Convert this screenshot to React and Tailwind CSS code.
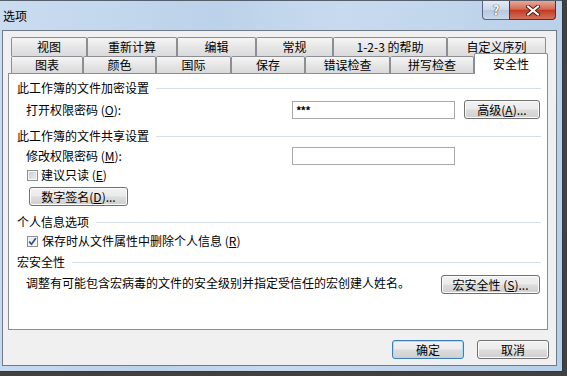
import React from "react";

function Header({ children, className }) {
  return (
    <div className={`flex h-[14px] items-center pl-[8px] pr-[6px] ${className}`}>
      <span>{children}</span>
      <div className="ml-[7px] h-px flex-1 bg-[#d5dfe5]" />
    </div>
  );
}

function Btn({ className, children, focus }) {
  return (
    <div
      className={`flex items-center justify-center rounded-[3px] border ${
        focus
          ? "border-[#3c7fb1] shadow-[inset_0_0_0_1px_#a9dcf7]"
          : "border-[#707070] shadow-[inset_0_0_0_1px_#fbfbfb]"
      } bg-[linear-gradient(#f2f2f2_0%,#ebebeb_48%,#dddddd_52%,#cfcfcf_100%)] ${className}`}
    >
      {children}
    </div>
  );
}

function Check({ checked }) {
  return (
    <div
      className={`flex h-[11px] w-[11px] shrink-0 items-center justify-center border border-[#8e8f8f] ${
        checked
          ? "bg-[linear-gradient(135deg,#e4e6e8,#fbfbfb)]"
          : "bg-[linear-gradient(135deg,#c9cbcd,#eeeeee)]"
      } shadow-[inset_0_0_0_1px_#f6f6f6]`}
    >
      {checked && (
        <svg width="9" height="9" viewBox="0 0 9 9">
          <path d="M1.2 4.6 L3.5 7.2 L7.8 1.3" fill="none" stroke="#2f4f8f" strokeWidth="1.7" />
        </svg>
      )}
    </div>
  );
}

const U = ({ children }) => <span className="underline underline-offset-[1px]">{children}</span>;

const row1 = [
  { t: "视图", w: "w-[76px]" },
  { t: "重新计算", w: "w-[90px]" },
  { t: "编辑", w: "w-[79px]" },
  { t: "常规", w: "w-[77px]" },
  { t: "1-2-3 的帮助", w: "w-[114px]" },
  { t: "自定义序列", w: "w-[99px]" },
];
const row2 = [
  { t: "图表", w: "w-[72px]" },
  { t: "颜色", w: "w-[73px]" },
  { t: "国际", w: "w-[75px]" },
  { t: "保存", w: "w-[74px]" },
  { t: "错误检查", w: "w-[85px]" },
  { t: "拼写检查", w: "w-[84px]" },
];

const tabCls =
  "flex items-center justify-center rounded-t-[2px] border border-b-0 border-[#8c8e94] bg-[linear-gradient(#f5f5f5,#e6e6e6_50%,#dadada)]";

export default function App() {
  return (
    <div className="relative h-[376px] w-[567px] overflow-hidden bg-[#414141] font-['Noto_Sans_CJK_SC','Noto_Sans',sans-serif] text-[12px] leading-[14px] text-black">
      <div className="flex h-[372px] w-[563px] flex-col border-r border-b border-[#2e3a46] bg-[linear-gradient(100deg,#cadcf0_0%,#bcd2ea_35%,#c8daee_55%,#b6cee8_100%)]">
        {/* title bar */}
        <div className="flex h-[30px] shrink-0 items-start border-t border-[#55606c]">
          <div className="ml-[3px] mt-[8px]">选项</div>
          <div className="ml-auto mr-[6px] flex">
            <div className="flex h-[19px] w-[27px] items-center justify-center rounded-bl-[4px] border border-t-0 border-r-0 border-[#56667c] bg-[linear-gradient(#e3ebf5,#cbd8e8_50%,#b7c9de_51%,#c9d8ea)] text-[13px] font-bold text-white [text-shadow:0_0_1px_#333,0_0_1px_#333]">
              ?
            </div>
            <div className="flex h-[19px] w-[47px] items-center justify-center rounded-br-[4px] border border-t-0 border-[#6b2a20] bg-[linear-gradient(#e8a898,#d46a55_45%,#c23b22_52%,#d5705a)]">
              <svg width="14" height="11" viewBox="0 0 14 11">
                <path d="M2 1.5 L12 9.5 M12 1.5 L2 9.5" stroke="#4a1f18" strokeWidth="4" strokeLinecap="round" />
                <path d="M2 1.5 L12 9.5 M12 1.5 L2 9.5" stroke="#ffffff" strokeWidth="2.2" strokeLinecap="round" />
              </svg>
            </div>
          </div>
        </div>

        {/* client */}
        <div className="ml-[2px] flex h-[336px] w-[555px] shrink-0 flex-col border border-[#6d7a88] bg-[#f0f0f0] pl-[5px] pt-[6px]">
          {/* tabs */}
          <div className="ml-[3px] flex flex-col">
            <div className="flex h-[19px]">
              {row1.map((r) => (
                <div key={r.t} className={`${tabCls} ${r.w}`}>
                  {r.t}
                </div>
              ))}
            </div>
            <div className="flex h-[17px] items-start">
              {row2.map((r) => (
                <div key={r.t} className={`${tabCls} h-[17px] ${r.w}`}>
                  {r.t}
                </div>
              ))}
              <div className="relative z-10 -mt-[3px] flex h-[21px] w-[74px] items-center justify-center rounded-t-[2px] border border-b-0 border-[#898c95] bg-white">
                安全性
              </div>
            </div>
          </div>

          {/* panel */}
          <div className="flex h-[257px] w-[540px] shrink-0 flex-col border border-[#898c95] bg-white">
            <Header className="mt-[7px]">此工作簿的文件加密设置</Header>
            <div className="mt-[5px] flex h-[19px] items-center">
              <div className="w-[283px] pl-[17px]">
                打开权限密码 (<U>O</U>):
              </div>
              <div className="flex h-[18px] w-[163px] items-center border border-[#a9a9a9] pl-[3px] text-[11px] font-bold tracking-[-1px]">
                ***
              </div>
              <Btn className="ml-[9px] h-[19px] w-[76px]">
                高级(<U>A</U>)...
              </Btn>
            </div>

            <Header className="mt-[10px]">此工作簿的文件共享设置</Header>
            <div className="mt-[4px] flex h-[18px] items-center">
              <div className="w-[283px] pl-[17px]">
                修改权限密码 (<U>M</U>):
              </div>
              <div className="h-[18px] w-[163px] border border-[#a9a9a9]" />
            </div>
            <div className="mt-[3px] flex h-[14px] items-center pl-[18px]">
              <Check />
              <span className="ml-[3px]">
                建议只读 (<U>E</U>)
              </span>
            </div>
            <div className="mt-[5px] flex pl-[20px]">
              <Btn className="h-[19px] w-[99px]">
                数字签名(<U>D</U>)...
              </Btn>
            </div>

            <Header className="mt-[9px]">个人信息选项</Header>
            <div className="mt-[5px] flex h-[14px] items-center pl-[18px]">
              <Check checked />
              <span className="ml-[4px]">
                保存时从文件属性中删除个人信息 (<U>R</U>)
              </span>
            </div>

            <Header className="mt-[7px]">宏安全性</Header>
            <div className="mt-[6px] flex items-start">
              <div className="mt-[1px] w-[432px] pl-[17px]">
                调整有可能包含宏病毒的文件的安全级别并指定受信任的宏创建人姓名。
              </div>
              <Btn className="h-[19px] w-[99px]">
                宏安全性 (<U>S</U>)...
              </Btn>
            </div>
          </div>

          {/* bottom buttons */}
          <div className="mt-[10px] flex justify-end gap-[13px] pr-[7px]">
            <Btn focus className="h-[19px] w-[72px]">
              确定
            </Btn>
            <Btn className="h-[19px] w-[72px]">取消</Btn>
          </div>
        </div>
      </div>
    </div>
  );
}
